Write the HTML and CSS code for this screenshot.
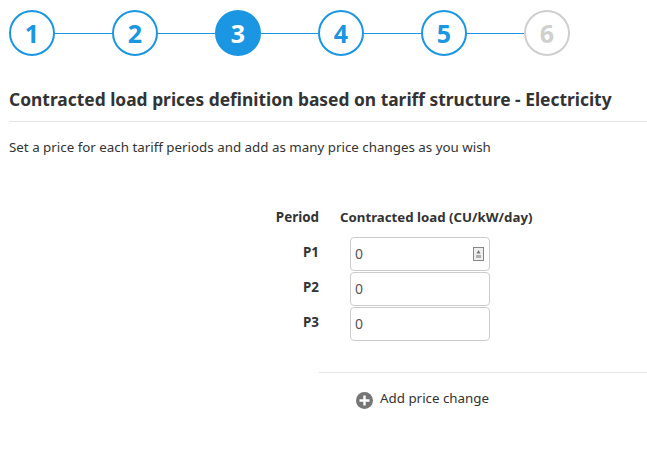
FILE: index.html
```html
<!DOCTYPE html>
<html>
  <head>
    <meta charset="UTF-8" />
    <title>Contracted load prices</title>
    <link rel="stylesheet" href="styles.css">
  </head>
  <body>
    <div class="stepper">
      <div class="step">1</div>
      <div class="line"></div>
      <div class="step">2</div>
      <div class="line"></div>
      <div class="step active">3</div>
      <div class="line"></div>
      <div class="step">4</div>
      <div class="line"></div>
      <div class="step">5</div>
      <div class="line"></div>
      <div class="step disabled">6</div>
    </div>

    <h1 class="title">Contracted load prices definition based on tariff structure - Electricity</h1>
    <p class="description">Set a price for each tariff periods and add as many price changes as you wish</p>

    <div class="prices">
      <div class="head-period">Period</div>
      <div class="head-load">Contracted load (CU/kW/day)</div>

      <div class="period">P1</div>
      <div class="field">
        <input type="text" class="price-input" value="0">
        <svg class="spin" width="11" height="14" viewBox="0 0 11 14">
          <rect x="0.5" y="0.5" width="10" height="13" fill="#efefef" stroke="#858585"/>
          <path d="M5.5 3 L7.5 6.5 H3.5 Z" fill="#777"/>
          <path d="M3 8 H8 V11 H3 Z" fill="#b0b0b0"/>
        </svg>
      </div>

      <div class="period">P2</div>
      <div class="field">
        <input type="text" class="price-input" value="0">
      </div>

      <div class="period">P3</div>
      <div class="field">
        <input type="text" class="price-input" value="0">
      </div>
    </div>

    <div class="add-section">
      <div class="add-price">
        <svg class="add-icon" width="17" height="17" viewBox="0 0 17 17">
          <circle cx="8.5" cy="8.5" r="8.5" fill="#757575"/>
          <path d="M8.5 3.5 V13.5 M3.5 8.5 H13.5" stroke="#fff" stroke-width="2.4"/>
        </svg>
        <span>Add price change</span>
      </div>
    </div>
  </body>
</html>
```

FILE: styles.css
```css
body, html {
    margin: 0;
    padding: 0;
    background-color: #fff;
    font-family: "Noto Sans", Arial, sans-serif;
    color: #333;
}

.stepper {
    display: flex;
    align-items: center;
    width: 561px;
    padding: 10px 0 0 9px;
}

.step {
    width: 46px;
    height: 46px;
    box-sizing: border-box;
    flex: none;
    display: flex;
    justify-content: center;
    align-items: center;
    border: 2px solid #1a96e2;
    border-radius: 50%;
    color: #1a96e2;
    font-size: 25px;
    font-weight: 700;
}

.step.active {
    background-color: #1a96e2;
    color: #fff;
}

.step.disabled {
    border-color: #cfcfcf;
    color: #cfcfcf;
}

.line {
    flex: 1;
    height: 1px;
    background-color: #1a96e2;
}

.title {
    margin: 31px 0 0 9px;
    padding-bottom: 10px;
    border-bottom: 1px solid #e5e5e5;
    font-size: 17.4px;
    line-height: 24px;
    font-weight: 700;
}

.description {
    margin: 15px 0 0 9px;
    font-size: 13.35px;
    line-height: 20px;
    color: #333;
}

.prices {
    display: grid;
    grid-template-columns: 319px 21px 150px;
    row-gap: 1px;
    margin-top: 50px;
    font-size: 13.4px;
    font-weight: 700;
}

.head-period {
    text-align: right;
    line-height: 20px;
    margin-bottom: 9px;
}

.head-load {
    grid-column: 3;
    font-size: 13.25px;
    line-height: 20px;
    white-space: nowrap;
}

.period {
    grid-column: 1;
    text-align: right;
    line-height: 30px;
}

.field {
    grid-column: 3;
    position: relative;
    margin-left: 10px;
    width: 140px;
}

.price-input {
    display: block;
    box-sizing: border-box;
    width: 140px;
    height: 34px;
    padding: 0 4px 2px;
    border: 1px solid #ccc;
    border-radius: 4px;
    font-family: inherit;
    font-size: 14px;
    color: #555;
}

.spin {
    position: absolute;
    top: 10px;
    right: 6px;
}

.add-section {
    margin: 31px 0 0 319px;
    padding-top: 15px;
    border-top: 1px solid #e5e5e5;
}

.add-price {
    display: flex;
    align-items: flex-start;
    gap: 7px;
    margin-left: 37px;
    font-size: 13.35px;
    line-height: 20px;
}

.add-icon {
    margin-top: 4px;
}
```
